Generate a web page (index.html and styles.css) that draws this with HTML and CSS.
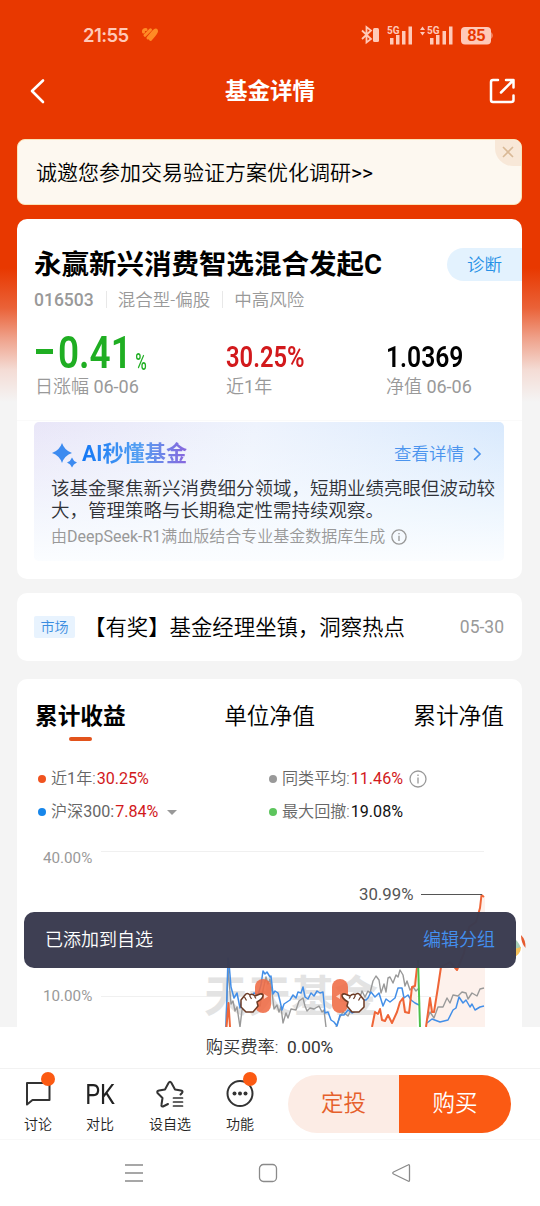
FILE: index.html
```
<!DOCTYPE html>
<html lang="zh-CN">
<head>
  <meta charset="UTF-8" />
  <meta name="viewport" content="width=device-width, initial-scale=1.0"/>
  <title>基金详情</title>
  <link rel="stylesheet" href="styles.css">
</head>
<body>
  <!-- 状态栏 -->
  <div class="statusbar">
    <span class="time">21:55</span>
    <svg class="heart" width="18" height="16" viewBox="0 0 18 16" fill="none" stroke="#ff8b25" stroke-width="3" stroke-linecap="round">
      <path d="M2.500 5 Q2 2.500 5 2.500 M4 8.300 L9.500 2.800 M7 11 L12.500 4.500 Q15.500 1.500 15.500 4.500 Q15.500 6 9.500 12.500"/>
    </svg>
    <svg class="signals" width="134" height="24" viewBox="0 0 134 24">
      <g fill="none" stroke="#ffc9b8" stroke-width="1.8">
        <path d="M2 7.5 L11 16 L6.5 19.5 V4 L11 7.5 L2 16"/>
      </g>
      <g fill="#ffc9b8">
        <rect x="13" y="5" width="6" height="14" rx="1.5"/>
        <text x="27" y="11" class="net">5G</text>
        <rect x="30" y="15" width="3.5" height="6.5"/>
        <rect x="36" y="12" width="3.5" height="9.5"/>
        <rect x="42" y="8" width="3.5" height="13.5"/>
        <rect x="48.5" y="3.5" width="3.5" height="18"/>
        <path d="M60 7 l2.5 -3.5 l2.5 3.5z M60 9 l2.5 3.5 l2.5 -3.5z"/>
        <text x="67" y="11" class="net">5G</text>
        <rect x="70" y="15" width="3.5" height="6.5"/>
        <rect x="76" y="12" width="3.5" height="9.5"/>
        <rect x="82.5" y="8" width="3.5" height="13.5"/>
        <rect x="89" y="3.5" width="3.5" height="18"/>
        <rect x="101" y="4" width="30" height="17.5" rx="4"/>
        <path d="M131.5 9 q2 3.5 0 7z"/>
      </g>
      <text x="107.5" y="18" class="battery">85</text>
    </svg>
  </div>

  <!-- 标题栏 -->
  <div class="navbar">
    <svg width="18" height="28" viewBox="0 0 18 28" fill="none" stroke="#fff" stroke-width="2.6" stroke-linecap="round" stroke-linejoin="round">
      <path d="M15 3.5 L4 14 L15 25"/>
    </svg>
    <h1>基金详情</h1>
    <svg width="28" height="28" viewBox="0 0 28 28" fill="none" stroke="#fff" stroke-width="2.5" stroke-linecap="round" stroke-linejoin="round">
      <path d="M10 3 H5 Q3 3 3 5 V23 Q3 25 5 25 H23 Q25.5 25 25.5 23 V18.5"/>
      <path d="M13 15.5 L25 3.5 M18 3 H25.5 V10.5"/>
    </svg>
  </div>

  <div class="main">
    <div class="banner">
      诚邀您参加交易验证方案优化调研<span class="n">&gt;&gt;</span>
      <span class="banner-close">
        <svg width="12" height="12" viewBox="0 0 12 12" stroke="#d9b996" stroke-width="1.6"><path d="M1 1 L11 11 M11 1 L1 11"/></svg>
      </span>
    </div>

    <!-- 基金信息 -->
    <div class="card fund">
      <div class="fund-head">
        <h2>永赢新兴消费智选混合发起C</h2>
        <span class="diagnose">诊断</span>
      </div>
      <div class="meta">
        <b>016503</b><i></i><span>混合型-偏股</span><i></i><span>中高风险</span>
      </div>
      <div class="stats">
        <div class="stat day">
          <div class="value green"><span class="minus"></span><span class="num">0.41</span><small>%</small></div>
          <div class="label">日涨幅 <span class="n">06-06</span></div>
        </div>
        <div class="stat year">
          <div class="value red"><span class="num">30.25%</span></div>
          <div class="label">近<span class="n">1</span>年</div>
        </div>
        <div class="stat nav">
          <div class="value"><span class="num">1.0369</span></div>
          <div class="label">净值 <span class="n">06-06</span></div>
        </div>
      </div>
      <div class="ai">
        <div class="ai-head">
          <svg width="28" height="28" viewBox="0 0 28 28" fill="#3d8bf0">
            <path d="M11 3 Q13.5 10.5 21 13 Q13.5 15.5 11 23 Q8.5 15.5 1 13 Q8.5 10.5 11 3z"/>
            <path d="M21 17.5 Q22.3 21.2 26 22.5 Q22.3 23.8 21 27.5 Q19.7 23.8 16 22.5 Q19.7 21.2 21 17.5z"/>
          </svg>
          <span class="ai-title">AI秒懂基金</span>
          <span class="more">查看详情</span>
          <svg width="10" height="16" viewBox="0 0 10 16" fill="none" stroke="#4b94ee" stroke-width="1.7"><path d="M2 2 L8 8 L2 14"/></svg>
        </div>
        <p>该基金聚焦新兴消费细分领域，短期业绩亮眼但波动较大，管理策略与长期稳定性需持续观察。</p>
        <div class="source"><span>由<span class="n">DeepSeek-R1</span>满血版结合专业基金数据库生成</span>
          <svg width="16" height="16" viewBox="0 0 18 18" fill="none" stroke="#999" stroke-width="1.5"><circle cx="9" cy="9" r="8"/><path d="M9 7.5 V13.5 M9 4.5 V6"/></svg>
        </div>
      </div>
    </div>

    <!-- 资讯 -->
    <div class="card news">
      <span class="tag">市场</span>
      <span class="news-title">【有奖】基金经理坐镇，洞察热点</span>
      <span class="date">05-30</span>
    </div>

    <!-- 收益走势 -->
    <div class="card trend">
      <div class="tabs">
        <div class="tab active">累计收益</div>
        <div class="tab">单位净值</div>
        <div class="tab">累计净值</div>
      </div>
      <div class="legend">
        <div class="item"><span class="dot orange"></span>近<span class="n">1</span>年:<span class="n red">30.25%</span></div>
        <div class="item"><span class="dot gray"></span>同类平均:<span class="n red">11.46%</span>
          <svg width="18" height="18" viewBox="0 0 18 18" fill="none" stroke="#999" stroke-width="1.3"><circle cx="9" cy="9" r="8"/><path d="M9 7.5 V13.5 M9 4.5 V6"/></svg>
        </div>
        <div class="item"><span class="dot blue"></span>沪深<span class="n">300:</span><span class="n red">7.84%</span><span class="caret"></span></div>
        <div class="item"><span class="dot lime"></span>最大回撤:<span class="n black">19.08%</span></div>
      </div>
      <svg class="chart" width="505" height="187" viewBox="17 840 505 187">
        <path d="M101 851.5 H484 M101 996.5 H484" stroke="#f0f0f0"/>
        <text x="43" y="863" class="axis">40.00%</text>
        <text x="43" y="1001" class="axis">10.00%</text>
        <text x="204" y="1012" class="watermark">天天基金</text>
        <path d="M426 1027 L430 998 L434 1012 L440 967 L457 970 L468 927 L480 912 L482 895 L485 897 V1027z M372 1027 L375 1012 L382 1020 L388 1015 L392 1023 L397 1012 L403 998 L409 1013 L412 987 L417 968 V1027z" fill="#fdf1ec"/>
        <g fill="none" stroke-linejoin="round">
          <path class="line-avg" d="M226 1027 L228 968 L231 1004 L233 1001 L235 1011 L237 1007 L240 1027 M240 1027 L242 1010 L246 1004 L251 1007 L256 1003 L260 1006 L263 990 L266 977 L268 984 L270 979 L272 992 L274 1009 L277 1005 L279 1012 L281 1007 L283 1023 L286 1013 L288 1018 L291 1009 L296 1010 L299 1001 L303 998 L305 1006 L307 1011 L310 1008 L314 1009 L319 1006 L322 1012 L324 1010 L326 1027 M336 1027 L340 1017 L343 1012 L348 1016 L353 1006 L358 1003 L362 991 L365 997 L368 991 L370 993 L373 981 L376 976 L379 980 L381 993 L384 984 L386 992 L388 978 L390 977 L393 983 L396 975 L398 977 L400 970 L403 975 L405 986 L407 981 L410 990 L413 987 L416 991 L419 988 M427 1020 L430 1012 L434 1018 L438 1007 L443 1007 L447 998 L450 1003 L453 995 L458 996 L462 992 L466 993 L468 999 L472 993 L477 996 L480 989 L484 988"/>
          <path class="line-hs" d="M226 1027 L228 958 L229 963 L231 987 L234 998 L237 993 L240 1008 L242 1000 L246 996 L249 1001 L254 993 L258 995 L261 985 L263 971 L265 974 L267 972 L270 977 L271 976 L273 994 L275 991 L278 993 L280 1001 L282 1010 L284 1004 L287 1002 L290 1000 L293 995 L296 998 L298 992 L301 993 L303 987 L305 997 L308 999 L311 993 L314 996 L317 991 L320 993 L323 992 L325 1013 L328 1012 L331 1020 L334 1022 L337 1026 L340 1015 L344 1015 L348 1010 L352 1013 L357 1010 L361 1000 L366 1000 L368 998 L371 992 L375 997 L379 993 L383 1006 L386 999 L390 1002 L395 998 L398 988 L402 988 L404 998 L408 995 L411 1000 L415 1003 L419 1005 M427 1023 L432 1019 L440 1022 L448 1020 L453 1010 L456 1008 L459 997 L463 1003 L466 1000 L470 1007 L472 1004 L475 1010 L480 1007 L484 1006"/>
          <path class="line-fund" d="M226.5 1027 L228.5 1003 L230 1027 M372 1027 L375 1012 L378 1014 L380 1009 L382 1020 L385 1021 L388 1015 L392 1023 L397 1012 L400 1002 L403 998 L405 1012 L409 1013 L412 987 L415 986 L417 967 M426 1027 L430 998 L432 1012 L434 1012 L438 987 L441 967 L450 962 L457 970 L464 953 L469 927 L476 922 L480 908 L481.5 895 L484 897"/>
          <path d="M418 960 L420 1027" stroke="#4fc04a" stroke-width="2"/>
          <path d="M421 894.5 H482" stroke="#555" stroke-width="1.2"/>
        </g>
        <text x="359" y="900" class="peak">30.99%</text>
        <g fill="#ef6b44" fill-opacity=".88">
          <rect x="255" y="979" width="16" height="34" rx="8"/>
          <rect x="332" y="979" width="16" height="34" rx="8"/>
        </g>
        <path d="M264 994 l4 2.5 l-4 2.5z M340 994 l-4 2.5 l4 2.5z" fill="#ffd8ca"/>
        <!-- 左右手势 -->
        <g id="hand" fill="#fff" stroke="#6b3a24" stroke-width="1.5" stroke-linejoin="round">
          <path d="M263 995 Q263.5 998 257 1002 L258 1006 L253 1012 L246 1012 L241 1007 L241 1000 L245 995 Q247 992 250 995 Q252 993 255 996 L260 994 Q262 993.5 263 995z"/>
          <path d="M244.5 997 l2 3.5 M249.5 995.5 l2 3.5 M254.5 996.5 l1.5 2" fill="none" stroke-width="1.2"/>
        </g>
        <use href="#hand" transform="translate(605 0) scale(-1 1)"/>
      </svg>
    </div>
  </div>

  <div class="fee">购买费率:&nbsp; <span class="n">0.00%</span></div>

  <!-- 底部操作栏 -->
  <div class="toolbar">
    <div class="tool talk">
      <svg width="30" height="30" viewBox="0 0 30 30" fill="none" stroke="#333" stroke-width="2" stroke-linejoin="round"><path d="M4 5 H25 Q26.5 5 26.5 6.5 V22 H9.5 L4 26.5z"/></svg>
      <span>讨论</span><em></em>
    </div>
    <div class="tool pk"><b>PK</b><span>对比</span></div>
    <div class="tool pick">
      <svg width="30" height="30" viewBox="0 0 30 30" fill="none" stroke="#333" stroke-width="2" stroke-linejoin="round" stroke-linecap="round">
        <path d="M13 26 L8 28.5 Q6 29 6.5 26.5 L7.5 20 L2.5 15 Q1.5 13 4 12.5 L10 11.5 L13.5 5 Q15 2.5 16.5 5 L20 11.5 L26 12.5 Q28.5 13 27 15 L25.5 16.5"/>
        <path d="M18.5 20 H27.5 M18.5 24 H27.5 M18.5 28 H27.5" stroke-width="1.7"/>
      </svg>
      <span>设自选</span>
    </div>
    <div class="tool func">
      <svg width="30" height="30" viewBox="0 0 30 30" fill="none" stroke="#333" stroke-width="2"><circle cx="15" cy="15.5" r="12.5"/><g fill="#333" stroke="none"><circle cx="9.5" cy="15.5" r="2"/><circle cx="15" cy="15.5" r="2"/><circle cx="20.5" cy="15.5" r="2"/></g></svg>
      <span>功能</span><em></em>
    </div>
    <div class="actions"><div class="plan">定投</div><div class="buy">购买</div></div>
  </div>

  <!-- 系统导航 -->
  <div class="sysnav">
    <svg width="20" height="20" viewBox="0 0 20 20" stroke="#8a8a8a" stroke-width="1.3"><path d="M1 2 H19 M1 10 H19 M1 18 H19"/></svg>
    <svg width="20" height="20" viewBox="0 0 20 20" fill="none" stroke="#8a8a8a" stroke-width="1.3"><rect x="1.5" y="1.5" width="17" height="17" rx="4"/></svg>
    <svg width="20" height="20" viewBox="0 0 20 20" fill="none" stroke="#8a8a8a" stroke-width="1.3" stroke-linejoin="round"><path d="M17 2 Q18.5 1 18.5 3 V17 Q18.5 19 17 18 L2.5 11 Q1 10 2.5 9z"/></svg>
  </div>

  <!-- 浮动挂件和提示 -->
  <svg class="pendant" width="18" height="34" viewBox="0 0 18 34">
    <path d="M0 4 Q7 8 10 16 L0 18z" fill="#a6cdb5"/>
    <path d="M0 18 L10 15 Q10 23 0 27z" fill="#f7c25a"/>
    <path d="M10 3 Q10 11 14.5 16 Q15 8 10 3z" fill="#e65a2e"/>
  </svg>
  <div class="toast"><span>已添加到自选</span><a>编辑分组</a></div>
</body>
</html>
```
FILE: styles.css
```
* {
  box-sizing: border-box;
}

body {
  font-family: Roboto, "Noto Sans CJK SC", sans-serif;
  font-weight: 350;
  margin: 0;
  width: 540px;
  height: 1206px;
  overflow: hidden;
  position: relative;
  display: flex;
  flex-direction: column;
  color: #000;
  background: linear-gradient(#e83800 0, #e83800 268px, #ea6238 308px, #efa18a 338px, #f4dcd5 370px, #f4f4f4 402px);
}

svg {
  display: block;
  flex: none;
}

h1, h2, p {
  margin: 0;
}

/* 数字和英文用常规字重 */
.n {
  font-weight: 400;
}

.statusbar {
  height: 69px;
  flex: none;
  display: flex;
  align-items: center;
  padding: 0 46px 0 83px;
}

.time {
  font: 600 18.5px/24px Inter, sans-serif;
  letter-spacing: -0.6px;
  color: #ffc9b8;
}

.heart {
  margin-left: 12px;
}

.signals {
  margin-left: auto;
}

.net {
  font: bold 10px Roboto, sans-serif;
}

.battery {
  font: bold 16px "Liberation Sans", sans-serif;
  fill: #e83800;
}

.navbar {
  height: 44px;
  flex: none;
  display: flex;
  align-items: center;
  justify-content: space-between;
  padding: 0 24px 0 28px;
}

.navbar h1 {
  font-size: 22.5px;
  line-height: 30px;
  color: #fff;
  margin-left: 6px;
}

.main {
  height: 914px;
  flex: none;
  overflow: hidden;
  padding: 26px 18px 0 17px;
}

.banner {
  position: relative;
  height: 66px;
  margin-bottom: 14px;
  padding-left: 18px;
  border: 1px solid #fbe3b8;
  border-radius: 8px;
  background: #fdf8f0;
  font-size: 21px;
  line-height: 67px;
  overflow: hidden;
}

.banner-close {
  position: absolute;
  top: 0;
  right: 0;
  width: 26px;
  height: 26px;
  padding: 6px 0 0 7px;
  background: #f8e8d8;
  border-bottom-left-radius: 18px;
}

.card {
  background: #fff;
  border-radius: 10px;
}

.fund {
  height: 360px;
  margin-bottom: 14px;
  padding-top: 28px;
}

.fund-head {
  display: flex;
  justify-content: space-between;
  height: 34px;
  padding-left: 17px;
}

.fund-head h2 {
  font-size: 27.5px;
  line-height: 36px;
  white-space: nowrap;
}

.diagnose {
  width: 75px;
  height: 33px;
  margin-top: 1px;
  padding-left: 20px;
  border-radius: 17px 0 0 17px;
  background: #e3f2fe;
  color: #2590e6;
  font-size: 17.5px;
  line-height: 34px;
}

.meta {
  display: flex;
  align-items: center;
  height: 37px;
  padding-left: 17px;
  font-size: 17.5px;
  line-height: 24px;
  color: #999;
}

.meta b {
  font-weight: 500;
}

.meta i {
  width: 1px;
  height: 17px;
  margin: 0 11px 0 12px;
  background: #e8e8e8;
}

.stats {
  display: flex;
  height: 103px;
  padding-left: 18px;
  border-bottom: 1px solid #fafafa;
}

.stat.day {
  width: 191px;
}

.stat.year {
  width: 160px;
}

.value {
  display: flex;
  align-items: flex-end;
  height: 56px;
}

.value.green {
  color: #1fae22;
}

.num {
  font-size: 29px;
  font-weight: 600;
  line-height: 34px;
  transform: scaleX(0.82);
  transform-origin: left;
}

.day .num {
  width: 72px;
  margin-left: 5px;
  font-size: 45px;
  line-height: 42px;
}

.nav .num {
  transform: scaleX(0.85);
}

.minus {
  width: 17px;
  height: 5px;
  margin: 0 0 20px 1px;
  background: currentColor;
}

.day small {
  font-size: 24px;
  font-weight: 500;
  line-height: 27px;
  margin-bottom: -2px;
  transform: scaleX(0.65);
  transform-origin: left;
  padding-left: 8px;
}

.red {
  color: #d2191c;
}

.label {
  font-size: 18px;
  line-height: 24px;
  margin-top: 1px;
  color: #999;
}

.ai {
  width: 470px;
  height: 139px;
  margin: 1px 0 0 17px;
  padding: 18px 8px 0 17px;
  border-radius: 5px;
  background:
    linear-gradient(rgba(248, 252, 255, 0) 0, rgba(248, 252, 255, 0.75) 70%, #fbfdff 100%),
    linear-gradient(100deg, #e9e6f8 0, #eef3fd 45%, #d6e8fd 100%);
}

.ai-head {
  display: flex;
  align-items: center;
  height: 28px;
  padding-right: 14px;
  line-height: 24px;
}

.ai-title {
  margin: 0 auto 0 3px;
  font-size: 21.2px;
  font-weight: bold;
  line-height: 28px;
  background: linear-gradient(90deg, #1277f5, #55a0f2 55%, #8866dd);
  -webkit-background-clip: text;
  background-clip: text;
  color: transparent;
}

.more {
  margin-right: 8px;
  font-size: 17.5px;
  color: #4b94ee;
}

.ai p {
  margin-top: 11px;
  font-size: 18.5px;
  line-height: 21.5px;
  color: #303238;
}

.source {
  display: flex;
  align-items: center;
  gap: 6px;
  margin-top: 3px;
  font-size: 16px;
  line-height: 23px;
  color: #999;
  white-space: nowrap;
}

.news {
  display: flex;
  align-items: center;
  height: 68px;
  margin-bottom: 18px;
  padding: 0 18px 0 17px;
  line-height: 30px;
}

.tag {
  width: 41px;
  height: 22px;
  border-radius: 2px;
  background: #e8f3fe;
  color: #398ce0;
  font-size: 14px;
  line-height: 22px;
  text-align: center;
}

.news-title {
  margin: 2px 0 0 9px;
  font-size: 21.4px;
  white-space: nowrap;
}

.date {
  margin-left: auto;
  font-size: 17.5px;
  font-weight: 400;
  color: #999;
}

.trend {
  height: 380px;
  overflow: hidden;
}

.tabs {
  display: flex;
  justify-content: space-between;
  height: 83px;
  padding: 22px 18px 0;
}

.tab {
  font-size: 22.7px;
  line-height: 32px;
}

.tab.active {
  font-weight: bold;
}

.tab.active::after {
  content: "";
  display: block;
  width: 23px;
  height: 4px;
  margin: 4px auto 0;
  border-radius: 2px;
  background: #e2531c;
}

.legend {
  display: grid;
  grid-template-columns: 231px 1fr;
  grid-auto-rows: 33px;
  height: 78px;
  padding-left: 21px;
}

.item {
  display: flex;
  align-items: center;
  font-size: 16.1px;
  line-height: 20px;
  color: #666;
}

.item svg {
  margin-left: 6px;
}

.dot {
  width: 8px;
  height: 8px;
  margin-right: 5px;
  border-radius: 50%;
}

.item .red {
  color: #d2191c;
  margin-left: 1px;
}

.item .black {
  color: #111;
  margin-left: 1px;
}

.orange {
  background: #f0531f;
}

.gray {
  background: #999;
}

.blue {
  background: #1786ea;
}

.lime {
  background: #5dc55d;
}

.caret {
  margin: 1px 0 0 9px;
  border: 5px solid transparent;
  border-top-color: #999;
  border-bottom: 0;
}

.axis {
  font-size: 15.2px;
  font-weight: 400;
  fill: #999;
}

.peak {
  font-size: 16.8px;
  font-weight: 400;
  fill: #555;
}

.watermark {
  font-size: 43.5px;
  font-weight: bold;
  fill: #e3e3e3;
}

.line-avg {
  stroke: #999;
  stroke-width: 1.4;
}

.line-hs {
  stroke: #438fe8;
  stroke-width: 1.5;
}

.line-fund {
  stroke: #ef6537;
  stroke-width: 2;
}

.fee {
  height: 41px;
  flex: none;
  padding-right: 1px;
  background: #fff;
  text-align: center;
  font-size: 17.3px;
  line-height: 41px;
  color: #333;
}

.toolbar {
  display: flex;
  height: 72px;
  flex: none;
  padding: 6px 29px 0 8px;
  background: #fff;
  border-top: 1px solid #f2f2f2;
  border-bottom: 1px solid #f8f8f8;
}

.tool {
  position: relative;
  display: flex;
  flex-direction: column;
  align-items: center;
  width: 60px;
  padding-top: 3px;
  font-size: 14px;
  line-height: 20px;
  color: #222;
}

.tool span {
  margin-top: 6px;
}

.pk {
  width: 64px;
}

.pk b {
  height: 30px;
  font-size: 27px;
  font-weight: normal;
  line-height: 34px;
  transform: scaleX(0.87);
}

.pick {
  width: 76px;
}

.func {
  width: 64px;
}

.tool em {
  position: absolute;
  top: -3px;
  right: 13px;
  width: 14px;
  height: 14px;
  border-radius: 50%;
  background: #fb5a13;
}

.func em {
  right: 15px;
}

.actions {
  display: flex;
  width: 223px;
  height: 58px;
  margin-left: auto;
  border-radius: 29px;
  overflow: hidden;
  font-size: 22.5px;
  line-height: 57px;
  text-align: center;
}

.plan {
  width: 111px;
  background: #fcece5;
  color: #e6602c;
}

.buy {
  flex: 1;
  background: #fb5a13;
  color: #fff;
}

.sysnav {
  display: flex;
  flex: 1;
  justify-content: space-between;
  align-items: center;
  padding: 0 129px 0 124px;
  background: #fff;
}

.pendant {
  position: absolute;
  left: 511px;
  top: 932px;
}

.toast {
  position: absolute;
  left: 24px;
  top: 912px;
  width: 492px;
  height: 56px;
  display: flex;
  justify-content: space-between;
  padding: 0 21px;
  border-radius: 10px;
  background: rgba(58, 59, 80, 0.98);
  color: #fff;
  font-size: 18px;
  line-height: 55px;
}

.toast a {
  color: #4390f0;
}
```
